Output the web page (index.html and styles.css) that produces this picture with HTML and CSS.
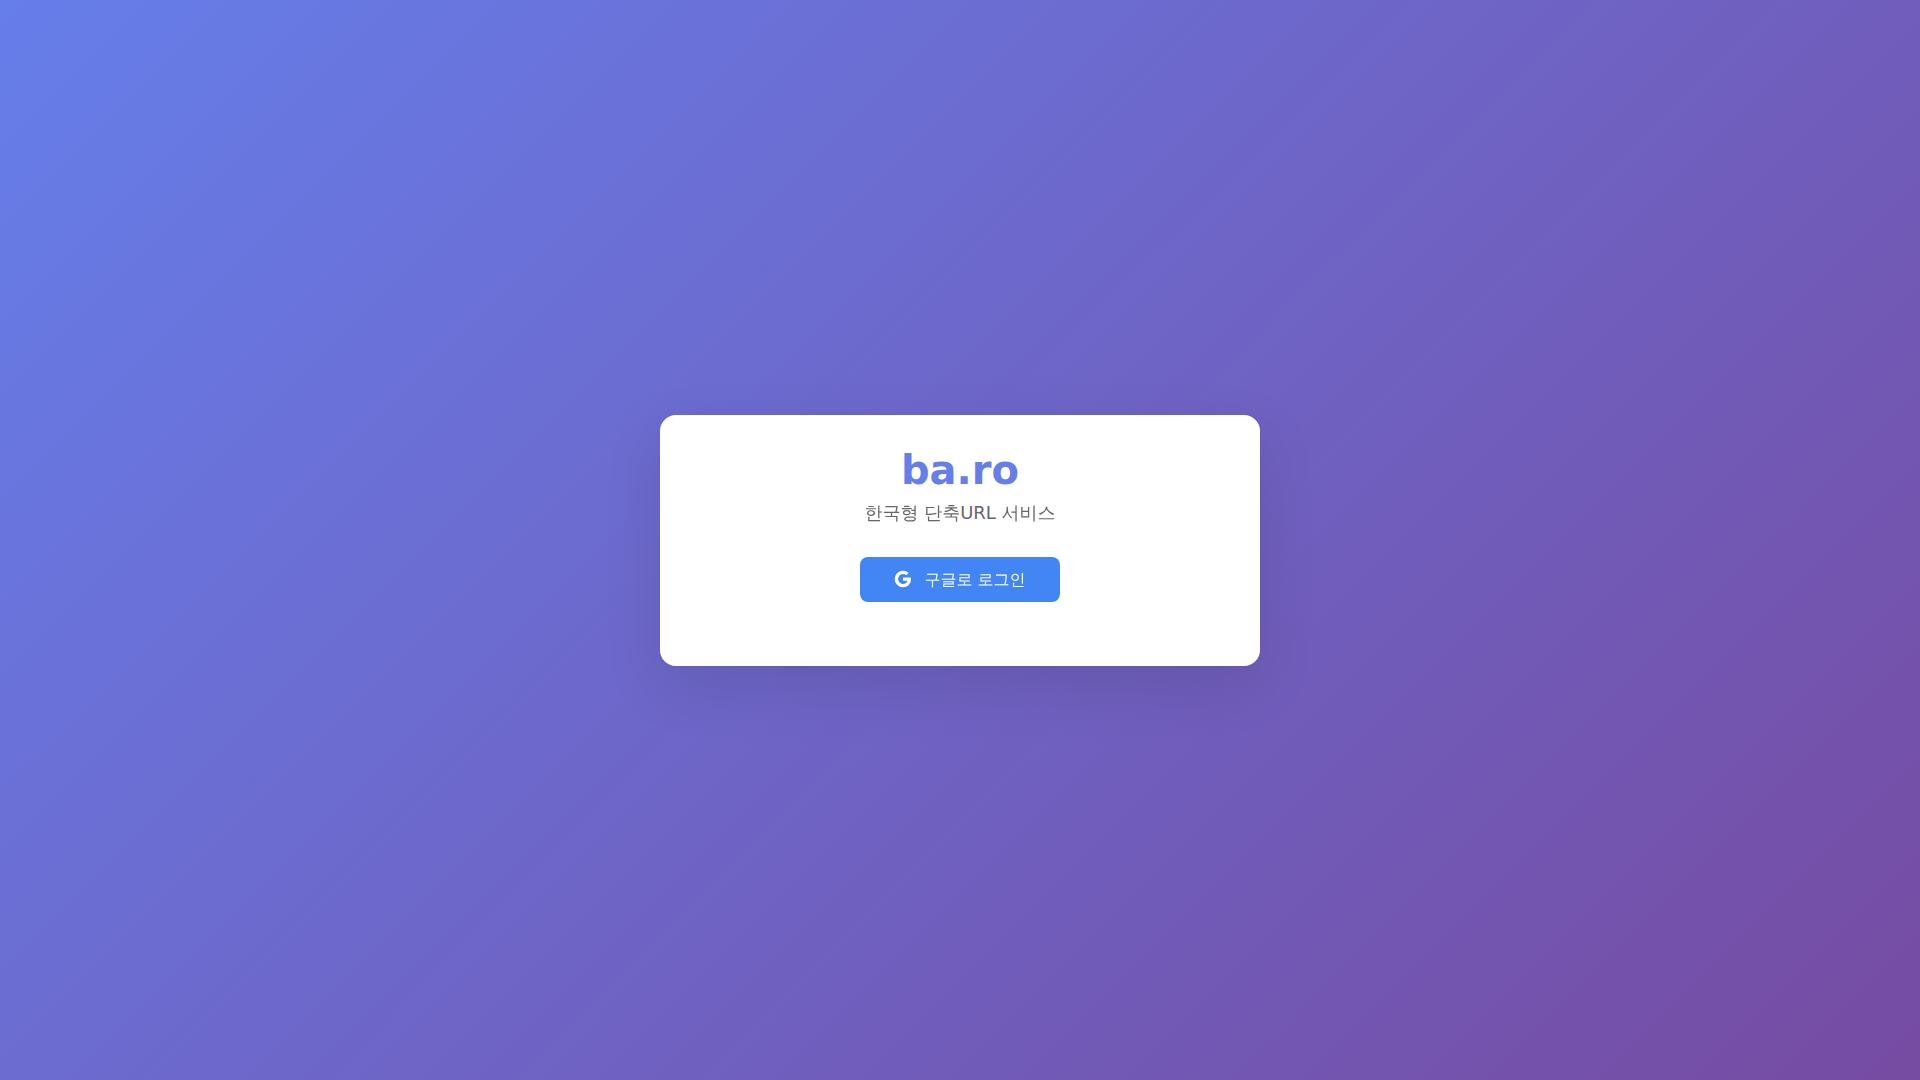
FILE: index.html
```html
<!DOCTYPE html>
<html lang="ko">
<head>
    <meta charset="UTF-8">
    <meta name="viewport" content="width=device-width, initial-scale=1.0">
    <title>ba.ro - 한국형 단축URL 서비스</title>
    <link rel="stylesheet" href="styles.css">
</head>
<body>
    <main class="container">
        <header class="header">
            <h1 class="logo">ba.ro</h1>
            <p class="subtitle">한국형 단축URL 서비스</p>
        </header>
        <div class="login-section">
            <button type="button" class="google-btn">
                <svg class="google-icon" viewBox="0 0 24 24" fill="currentColor" aria-hidden="true">
                    <path d="M22.56 12.25c0-.78-.07-1.53-.2-2.25H12v4.26h5.92c-.26 1.37-1.04 2.53-2.21 3.31v2.77h3.57c2.08-1.92 3.28-4.74 3.28-8.09z"/>
                    <path d="M12 23c2.97 0 5.46-.98 7.28-2.66l-3.57-2.77c-.98.66-2.23 1.06-3.71 1.06-2.86 0-5.29-1.93-6.16-4.53H2.18v2.84C3.99 20.53 7.7 23 12 23z"/>
                    <path d="M5.84 14.09c-.22-.66-.35-1.36-.35-2.09s.13-1.43.35-2.09V7.07H2.18C1.43 8.55 1 10.22 1 12s.43 3.45 1.18 4.93l2.85-2.22.81-.62z"/>
                    <path d="M12 5.38c1.62 0 3.06.56 4.21 1.64l3.15-3.15C17.45 2.09 14.97 1 12 1 7.7 1 3.99 3.47 2.18 7.07l3.66 2.84c.87-2.6 3.3-4.53 6.16-4.53z"/>
                </svg>
                구글로 로그인
            </button>
        </div>
    </main>
</body>
</html>
```
FILE: styles.css
```css
* {
    margin: 0;
    padding: 0;
    box-sizing: border-box;
}

body {
    font-family: "DejaVu Sans", "WenQuanYi Zen Hei", "Noto Sans CJK KR", sans-serif;
    background: linear-gradient(135deg, #667eea 0%, #764ba2 100%);
    min-height: 100vh;
    display: flex;
    align-items: center;
    justify-content: center;
    padding: 20px;
}

.container {
    background: white;
    border-radius: 16px;
    box-shadow: 0 20px 60px rgba(0, 0, 0, 0.1);
    padding: 32px;
    width: 100%;
    max-width: 600px;
}

.header {
    text-align: center;
    margin-bottom: 32px;
}

.logo {
    font-size: 40px;
    font-weight: bold;
    color: #667eea;
    margin-bottom: 8px;
}

.subtitle {
    color: #666;
    font-size: 18px;
    line-height: 24px;
}

.login-section {
    display: flex;
    justify-content: center;
    margin-bottom: 32px;
}

.google-btn {
    display: flex;
    align-items: center;
    justify-content: center;
    gap: 12px;
    min-width: 200px;
    background: #4285f4;
    color: white;
    border: none;
    border-radius: 8px;
    padding: 12px 32px;
    font-family: inherit;
    font-size: 16px;
    line-height: 21px;
    cursor: pointer;
}

.google-icon {
    width: 18px;
    height: 18px;
}
```
